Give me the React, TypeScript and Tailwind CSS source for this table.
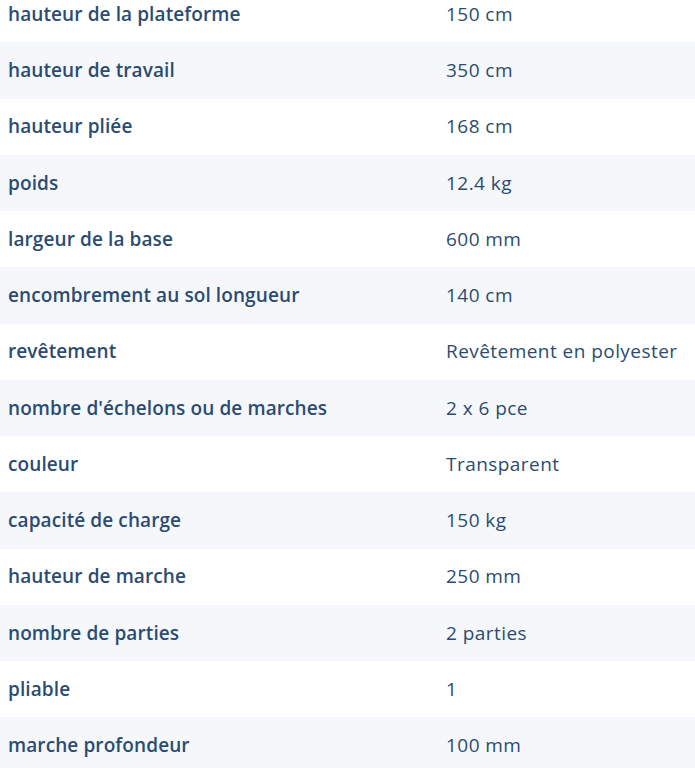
import React from "react";

const rows: [string, string][] = [
  ["hauteur de la plateforme", "150 cm"],
  ["hauteur de travail", "350 cm"],
  ["hauteur pliée", "168 cm"],
  ["poids", "12.4 kg"],
  ["largeur de la base", "600 mm"],
  ["encombrement au sol longueur", "140 cm"],
  ["revêtement", "Revêtement en polyester"],
  ["nombre d'échelons ou de marches", "2 x 6 pce"],
  ["couleur", "Transparent"],
  ["capacité de charge", "150 kg"],
  ["hauteur de marche", "250 mm"],
  ["nombre de parties", "2 parties"],
  ["pliable", "1"],
  ["marche profondeur", "100 mm"],
];

export default function App() {
  return (
    <div className="w-[695px] h-[768px] overflow-hidden bg-white" style={{ fontFamily: "'Open Sans', sans-serif" }}>
      <div className="-mt-[14px] flex flex-col">
        {rows.map(([k, v], i) => (
          <div
            key={k}
            className={`flex items-center h-[56.25px] text-[19px] text-[#2b4c72] ${i % 2 === 1 ? "bg-[#f5f7fa]" : "bg-white"}`}
          >
            <div className="w-[446px] pl-[8px] font-semibold tracking-[0.1px] whitespace-nowrap">{k}</div>
            <div className="flex-1 font-normal tracking-[0.45px] whitespace-nowrap">{v}</div>
          </div>
        ))}
      </div>
    </div>
  );
}
